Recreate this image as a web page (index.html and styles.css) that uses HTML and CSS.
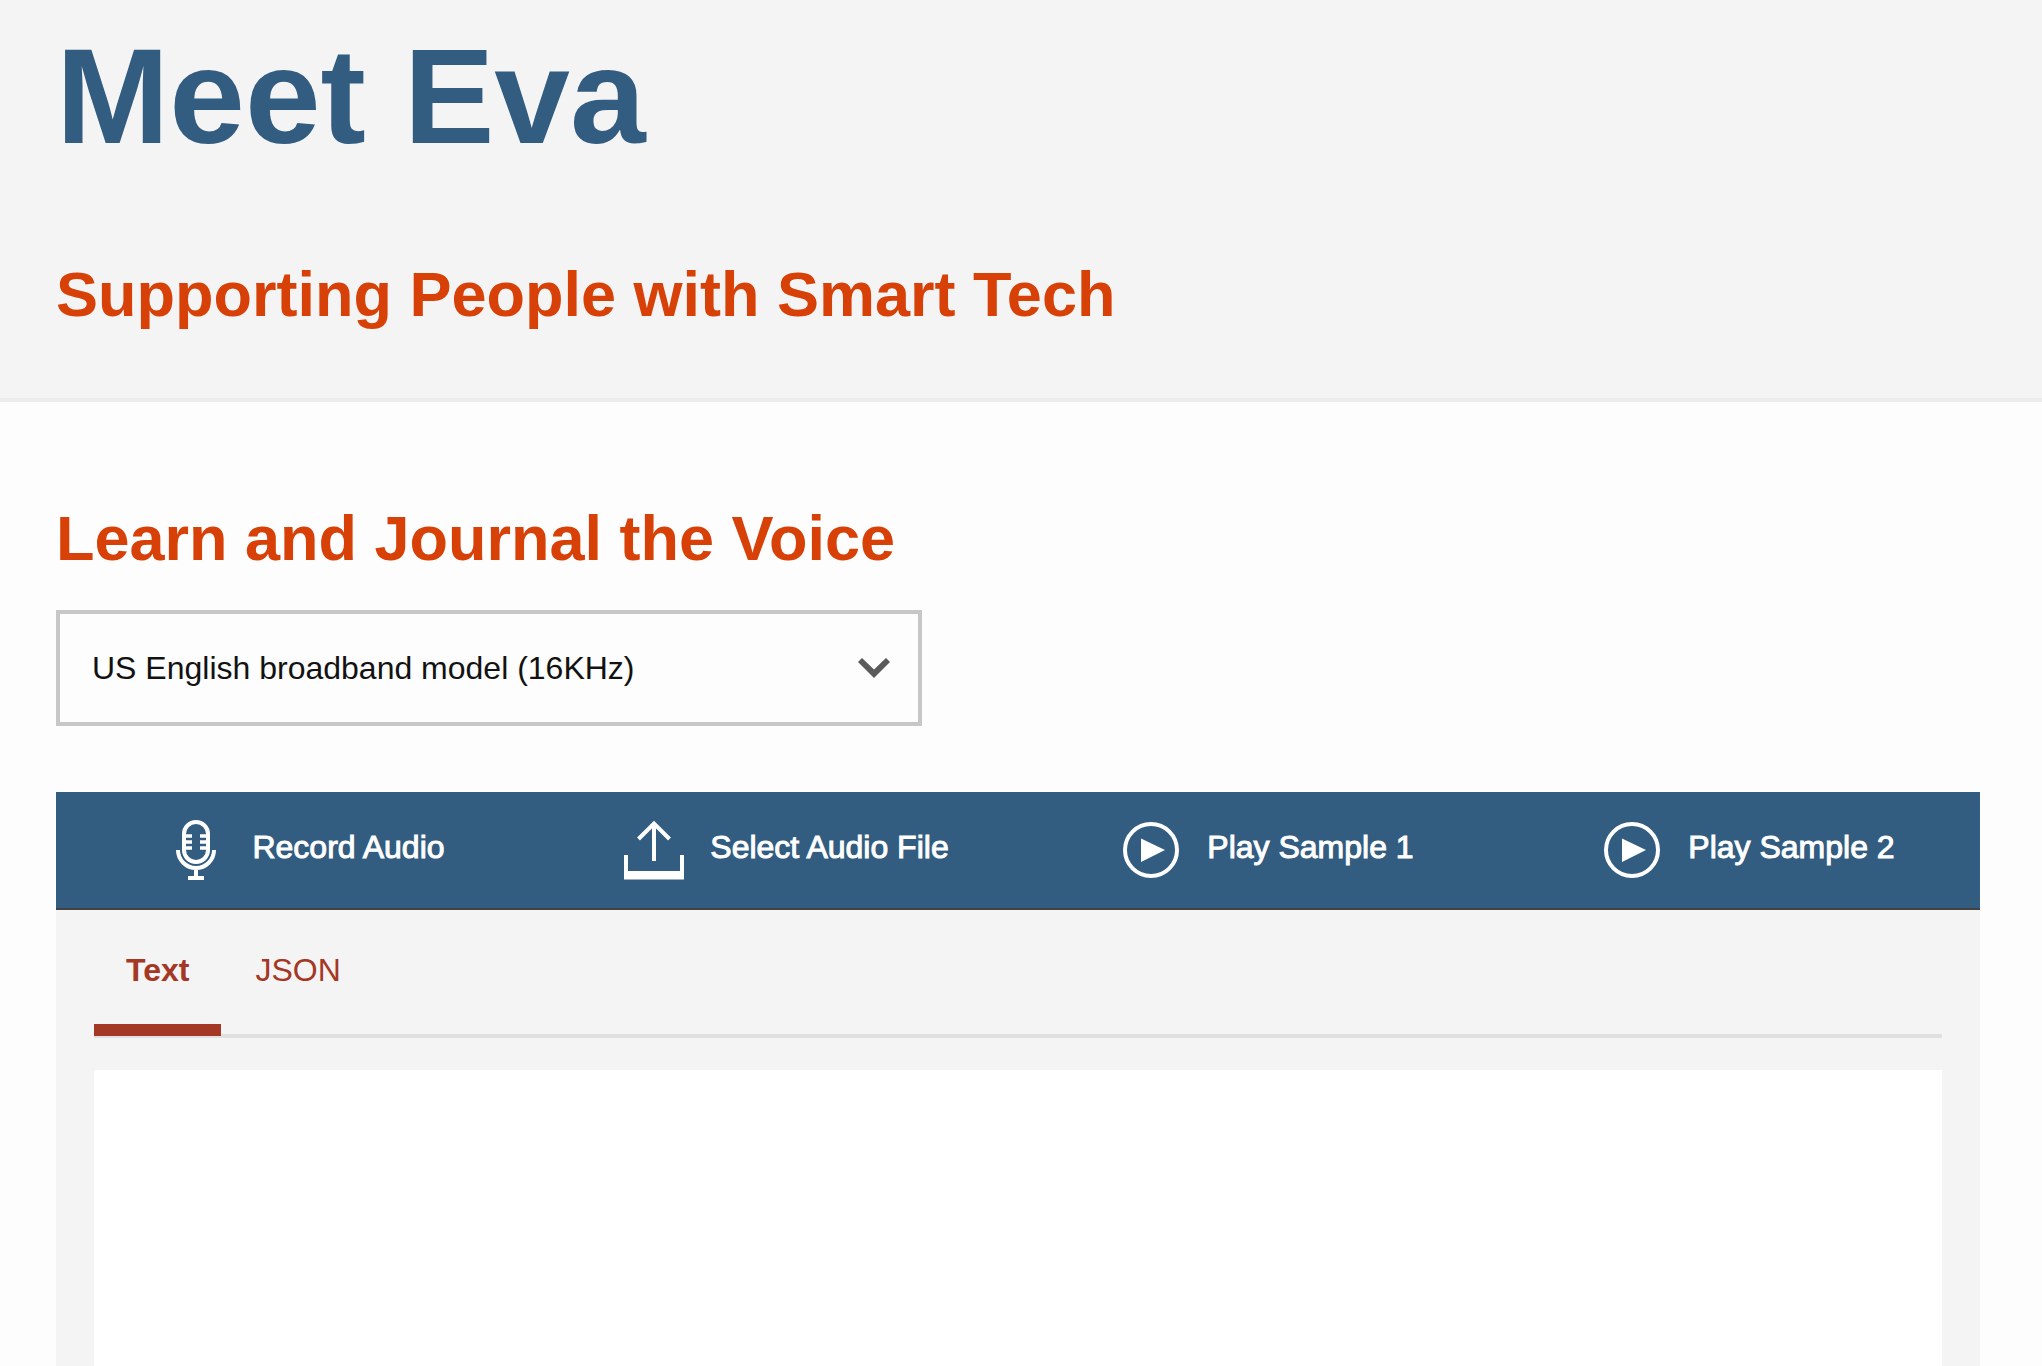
FILE: index.html
```html
<!DOCTYPE html>
<html lang="en">
<head>
<meta charset="utf-8">
<meta name="viewport" content="width=device-width, initial-scale=1">
<title>Meet Eva</title>
<link rel="stylesheet" href="styles.css">
</head>
<body>
<header class="banner">
  <h1 class="banner-title">Meet Eva</h1>
  <h2 class="heading">Supporting People with Smart Tech</h2>
</header>
<main class="content">
  <h2 class="heading"><label for="model">Learn and Journal the Voice</label></h2>
  <div class="picker">
    <select class="picker-select" id="model">
      <option>US English broadband model (16KHz)</option>
    </select>
    <svg class="picker-arrow" viewBox="0 0 32 20" aria-hidden="true"><path d="M0 4 4 0l12 11.500L28 0l4 4-16 16z" fill="#5a5a5a"/></svg>
  </div>
  <div class="toolbar">
    <button class="action" type="button">
      <svg class="action-icon" viewBox="0 0 60 60" fill="none" stroke="#fff" stroke-width="4" aria-hidden="true">
        <rect x="18" y="2" width="24" height="40" rx="12"/>
        <path d="M20 16h6M20 22h6M20 28h6M34 16h6M34 22h6M34 28h6" stroke-width="3.6"/>
        <path d="M12 30a18 18 0 0 0 36 0M30 48v9M22 58h16"/>
      </svg>
      <span>Record Audio</span>
    </button>
    <button class="action" type="button">
      <svg class="action-icon" viewBox="0 0 60 60" fill="none" stroke="#fff" stroke-width="4" aria-hidden="true">
        <path d="M30 41V4M14.500 19 30 3.500 45.500 19"/>
        <path d="M0 35h4v16h52V35h4v24.500H0z" fill="#fff" stroke="none"/>
      </svg>
      <span>Select Audio File</span>
    </button>
    <button class="action" type="button">
      <svg class="action-icon" viewBox="0 0 60 60" aria-hidden="true">
        <circle cx="30" cy="30" r="26" fill="none" stroke="#fff" stroke-width="4"/>
        <path d="M20 18.500v23.500L44 30z" fill="#fff"/>
      </svg>
      <span>Play Sample 1</span>
    </button>
    <button class="action" type="button">
      <svg class="action-icon" viewBox="0 0 60 60" aria-hidden="true">
        <circle cx="30" cy="30" r="26" fill="none" stroke="#fff" stroke-width="4"/>
        <path d="M20 18.500v23.500L44 30z" fill="#fff"/>
      </svg>
      <span>Play Sample 2</span>
    </button>
  </div>
  <section class="output">
    <div class="tabs" role="tablist">
      <button class="tab tab-active" type="button" role="tab" id="tab-text" aria-selected="true" aria-controls="transcript">Text</button>
      <button class="tab" type="button" role="tab" aria-selected="false">JSON</button>
    </div>
    <div class="transcript" id="transcript" role="tabpanel" aria-labelledby="tab-text"></div>
  </section>
</main>
</body>
</html>
```

FILE: styles.css
```css
* {
  box-sizing: border-box;
}

body {
  margin: 0;
  min-height: 100vh;
  display: flex;
  flex-direction: column;
  background: #fdfdfd;
  color: #121212;
  font-family: "Helvetica Neue", Helvetica, "Liberation Sans", Arial, sans-serif;
  font-size: 32px;
  line-height: 40px;
}

button,
select {
  margin: 0;
  border: 0;
  border-radius: 0;
  background: none;
  color: inherit;
  font: inherit;
}

.banner {
  padding: 16px 56px 64px;
  background: #f4f4f4;
  border-bottom: 4px solid #ececec;
}

.banner-title {
  margin: 0 0 78px;
  color: #325c80;
  font-size: 136px;
  line-height: 160px;
}

.heading {
  margin: 0;
  color: #d74108;
  font-size: 63px;
  line-height: 80px;
}

.content {
  flex: 1;
  display: flex;
  flex-direction: column;
  padding: 96px 62px 0 56px;
}

.picker {
  display: grid;
  align-items: center;
  width: 45%;
  margin: 32px 0 66px;
}

.picker-select {
  grid-area: 1 / 1;
  width: 100%;
  height: 116px;
  padding: 0 64px 0 32px;
  border: 4px solid #c7c7c7;
  appearance: none;
}

.picker-arrow {
  grid-area: 1 / 1;
  justify-self: end;
  width: 32px;
  height: 20px;
  margin-right: 32px;
  pointer-events: none;
}

.toolbar {
  display: grid;
  grid-template-columns: repeat(4, 1fr);
  background: #325c80;
  border-bottom: 2px solid #424242;
}

.action {
  display: flex;
  justify-content: center;
  gap: 26px;
  padding: 28px 0 28px 18px;
  color: #fff;
  line-height: 54px;
  -webkit-text-stroke: 1px #fff;
  white-space: nowrap;
}

.action-icon {
  width: 60px;
  height: 60px;
}

.output {
  flex: 1;
  display: flex;
  flex-direction: column;
  padding: 32px 38px 0;
  background: #f4f4f4;
}

.tabs {
  display: flex;
  gap: 2px;
  margin-bottom: 32px;
  border-bottom: 4px solid #e0e0e0;
}

.tab {
  margin-bottom: -2px;
  padding: 8px 32px 34px;
  border-bottom: 12px solid transparent;
  color: #a53725;
}

.tab-active {
  border-bottom-color: #a53725;
  font-weight: bold;
}

.transcript {
  flex: 1;
  min-height: 240px;
  background: #fff;
}
```
